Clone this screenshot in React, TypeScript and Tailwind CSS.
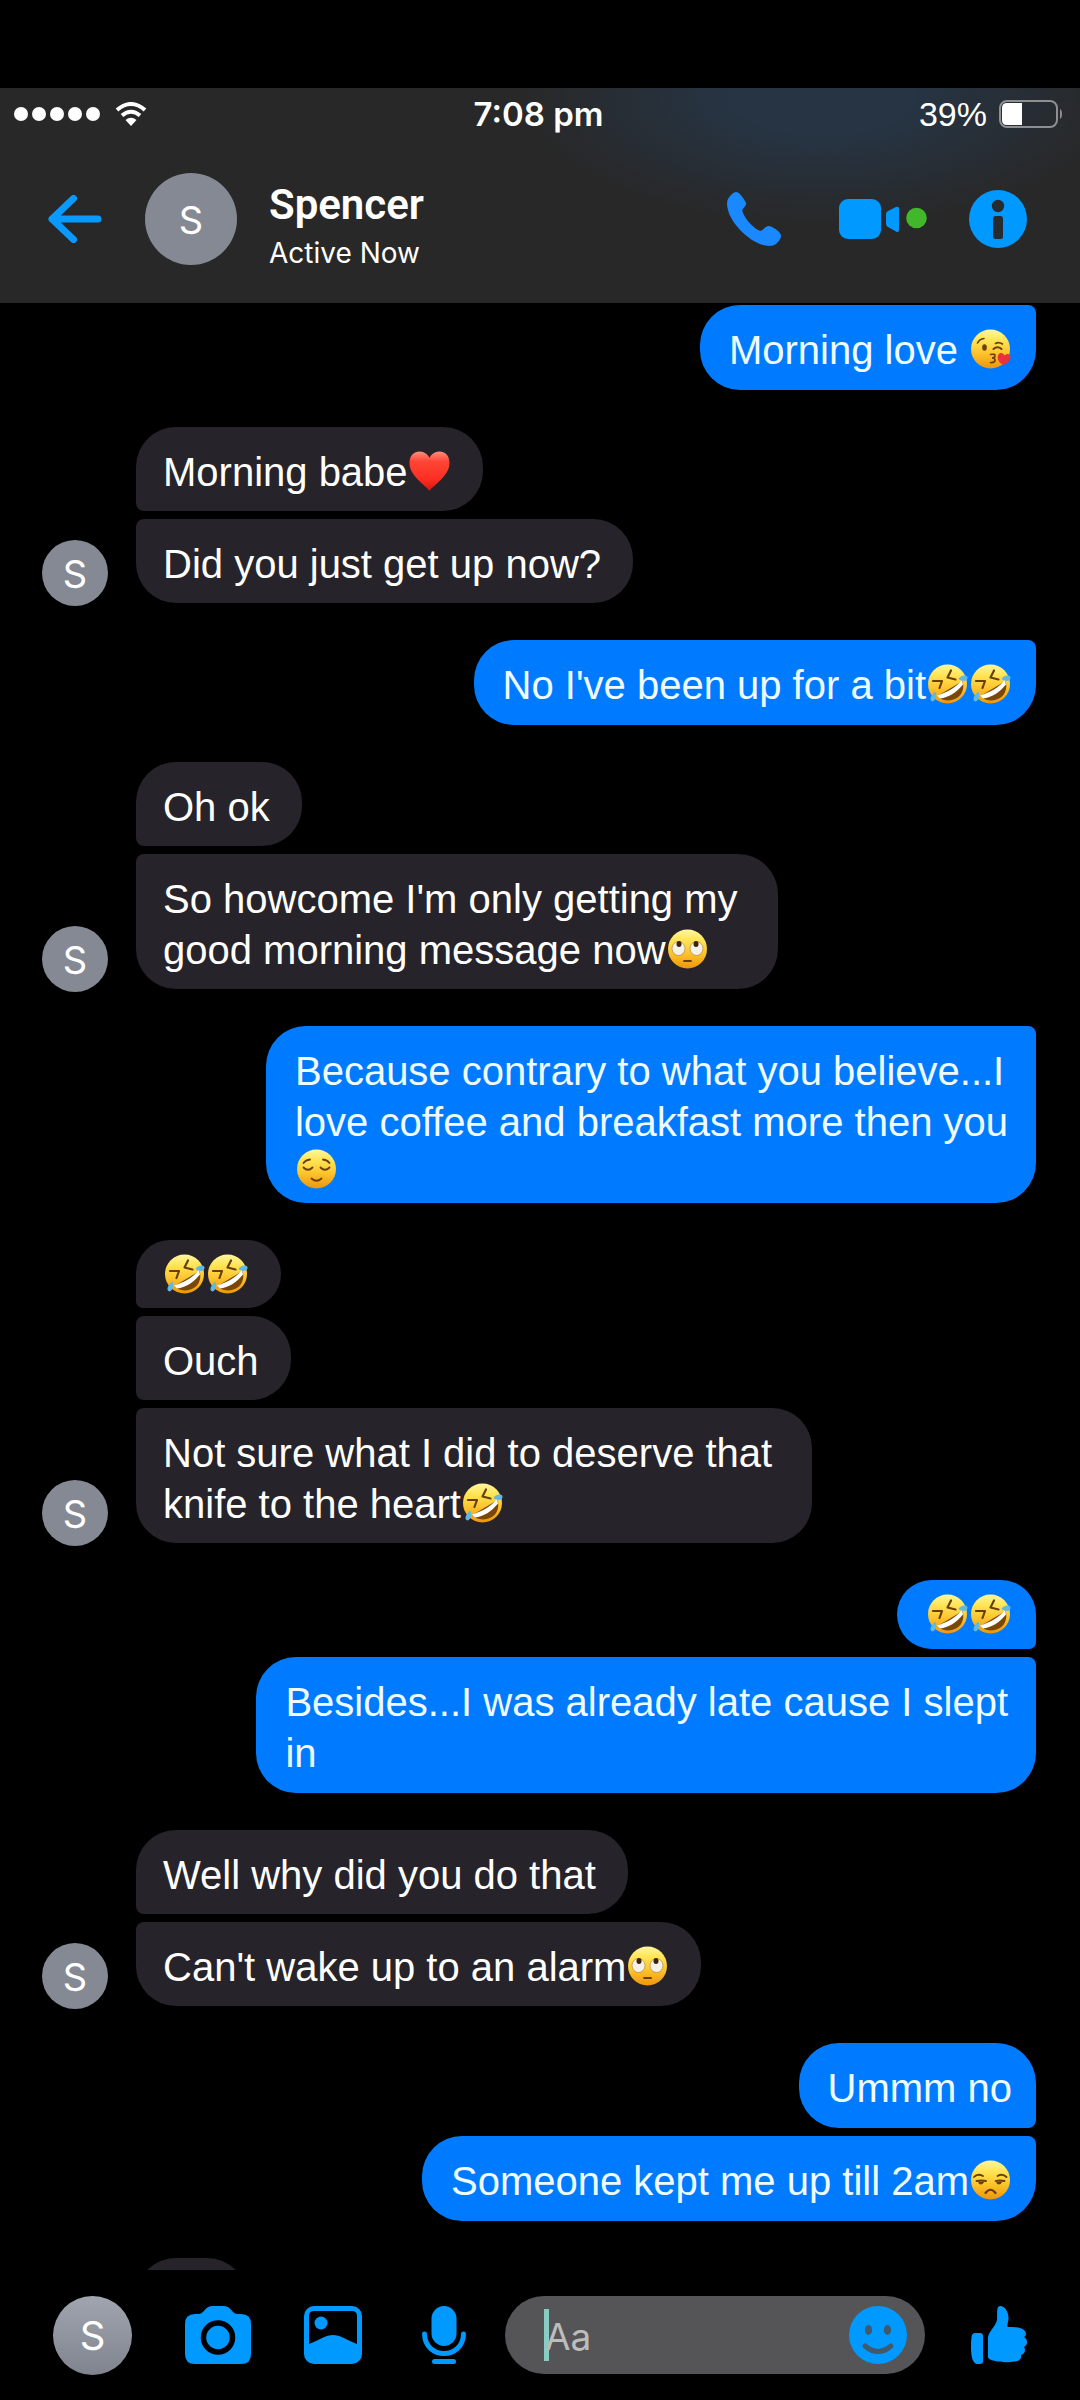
import type { ReactNode } from 'react'
import clsx from 'clsx'

type Message = {
  text: string
}

type Group = {
  from: 'me' | 'spencer'
  messages: Message[]
}

const groups: Group[] = [
  { from: 'me', messages: [{ text: 'Morning love 😘' }] },
  {
    from: 'spencer',
    messages: [{ text: 'Morning babe❤' }, { text: 'Did you just get up now?' }],
  },
  { from: 'me', messages: [{ text: "No I've been up for a bit🤣🤣" }] },
  {
    from: 'spencer',
    messages: [
      { text: 'Oh ok' },
      { text: "So howcome I'm only getting my\ngood morning message now🙄" },
    ],
  },
  {
    from: 'me',
    messages: [
      { text: 'Because contrary to what you believe...I\nlove coffee and breakfast more then you\n😌' },
    ],
  },
  {
    from: 'spencer',
    messages: [
      { text: '🤣🤣' },
      { text: 'Ouch' },
      { text: 'Not sure what I did to deserve that\nknife to the heart🤣' },
    ],
  },
  {
    from: 'me',
    messages: [
      { text: '🤣🤣' },
      { text: 'Besides...I was already late cause I slept\nin' },
    ],
  },
  {
    from: 'spencer',
    messages: [{ text: 'Well why did you do that' }, { text: "Can't wake up to an alarm🙄" }],
  },
  {
    from: 'me',
    messages: [{ text: 'Ummm no' }, { text: 'Someone kept me up till 2am😒' }],
  },
]

const brown = '#6b3f0a'

const emojiArt: Record<string, { label: string; art: ReactNode }> = {
  '😘': {
    label: 'face blowing a kiss',
    art: (
      <>
        <circle cx="20" cy="20" r="19.5" fill="url(#face)" />
        <g fill="none" stroke={brown} strokeWidth="1.6" strokeLinecap="round">
          <path d="M7 14 Q9 10 13.500 9.500" />
          <path d="M25 14.500 Q28 12.500 32 15" />
          <path d="M23 20 Q27 16.500 31 20" strokeWidth="2" />
          <path d="M20 25.500 Q25 24.500 24.500 27 Q24 29 21.500 29 Q25 29 24.500 31.500 Q24 34 20 33.500" />
        </g>
        <ellipse cx="14" cy="18.500" rx="2.300" ry="3.300" fill={brown} />
        <path d="M33 36 C28 34 26 29 28 25.500 C30 23 33 24 34 26.500 C36 24 39.500 24.500 40 27.500 C40.500 31 37 34.500 33 36 Z" fill="#e8323c" />
      </>
    ),
  },
  '❤': {
    label: 'red heart',
    art: (
      <path
        d="M20 40 C16 34 0 25 0 12 C0 4 5 0.500 10 0.500 C15 0.500 18.500 3.500 20 7 C21.500 3.500 25 0.500 30 0.500 C35 0.500 40 4 40 12 C40 25 24 34 20 40 Z"
        fill="url(#heart)"
      />
    ),
  },
  '🤣': {
    label: 'rolling on the floor laughing',
    art: (
      <>
        <circle cx="20" cy="20" r="19.5" fill="url(#face)" />
        <g fill="none" stroke={brown} strokeWidth="2.200" strokeLinecap="round" strokeLinejoin="round">
          <path d="M5.500 17 L14.500 17 L12 24" />
          <path d="M23.500 6.500 L20 13.500 L28 15.500" />
        </g>
        <path d="M10 32 L35 17 C37.500 25 34 33 26 35.500 C19 37.500 13 36 10 32 Z" fill="#7a4609" />
        <path d="M9.500 31.500 C20 28 28 24 34.500 16 L35.500 20.500 C29 28.500 21 33.500 12.500 34.500 Z" fill="#fff" />
        <path d="M31 15 C33 11.500 38 10.500 40 13 C40.500 17 36 18.500 31 15 Z" fill="#5fb9e6" />
        <path d="M8 27.500 C9.500 32 8 37 5 37.500 C1.500 37 2.500 31.500 8 27.500 Z" fill="#5fb9e6" />
      </>
    ),
  },
  '🙄': {
    label: 'face with rolling eyes',
    art: (
      <>
        <circle cx="20" cy="20" r="19.5" fill="url(#face)" />
        <g fill="#f4f1ea" stroke="#b9852f" strokeWidth="0.700">
          <ellipse cx="11" cy="19.500" rx="6.500" ry="7" />
          <ellipse cx="29" cy="19.500" rx="6.500" ry="7" />
        </g>
        <ellipse cx="11.500" cy="15" rx="2.500" ry="3" fill="#3f2306" />
        <ellipse cx="28.500" cy="15" rx="2.500" ry="3" fill="#3f2306" />
        <path d="M16.500 32 H23.500" stroke={brown} strokeWidth="1.800" strokeLinecap="round" />
      </>
    ),
  },
  '😌': {
    label: 'relieved face',
    art: (
      <>
        <circle cx="20" cy="20" r="19.5" fill="url(#face)" />
        <g fill="none" stroke={brown} strokeWidth="1.800" strokeLinecap="round">
          <path d="M7 18.500 Q11.500 23 16 18.500" />
          <path d="M24 18.500 Q28.500 23 33 18.500" />
          <path d="M7 14 Q9 11 13.500 10.500" />
          <path d="M26.500 10.500 Q31 11 33 14" />
          <path d="M15 29.500 Q20 34 25 29.500" />
        </g>
      </>
    ),
  },
  '😒': {
    label: 'unamused face',
    art: (
      <>
        <circle cx="20" cy="20" r="19.5" fill="url(#face)" />
        <g fill="none" stroke={brown} strokeWidth="1.800" strokeLinecap="round">
          <path d="M3.500 17 Q7 13 12.500 16" />
          <path d="M27 16 Q32 13 36 17" />
          <path d="M6 21 Q11 20 15.500 21" />
          <path d="M25 21 Q29 20 34 21" />
          <path d="M15 33 Q20 26.500 25 33" strokeWidth="2.200" />
        </g>
        <path d="M7.500 21.500 H14 Q12 25.500 8.500 24 Z M25.500 21.500 H32 Q30 25.500 26.500 24 Z" fill={brown} />
      </>
    ),
  },
}

function EmojiGradients() {
  return (
    <svg className="absolute h-0 w-0" aria-hidden="true">
      <defs>
        <linearGradient id="face" x1="0" y1="0" x2="0" y2="1">
          <stop offset="0" stopColor="#fff6a0" />
          <stop offset="0.25" stopColor="#ffe75a" />
          <stop offset="0.6" stopColor="#fdc52d" />
          <stop offset="1" stopColor="#ee950c" />
        </linearGradient>
        <linearGradient id="heart" x1="0" y1="0" x2="0" y2="1">
          <stop offset="0" stopColor="#ff8d7c" />
          <stop offset="0.25" stopColor="#ff4535" />
          <stop offset="0.7" stopColor="#fb2e22" />
          <stop offset="1" stopColor="#d9160f" />
        </linearGradient>
      </defs>
    </svg>
  )
}

function Emoji({ char, block }: { char: string; block?: boolean }) {
  const { label, art } = emojiArt[char]
  return (
    <svg
      viewBox="0 0 40 40"
      role="img"
      aria-label={label}
      className={clsx('mx-px h-10 w-[41px]', block ? 'block' : 'inline-block align-[-5px]')}
    >
      {art}
    </svg>
  )
}

function Line({ text }: { text: string }) {
  const parts = text.split(/(😘|❤|🤣|🙄|😌|😒)/u).filter(Boolean)
  const emojiOnly = parts.every((part) => part in emojiArt)

  if (emojiOnly) {
    return (
      <span className="flex h-[41px] items-end">
        {parts.map((part, i) => (
          <Emoji key={i} char={part} block />
        ))}
      </span>
    )
  }

  return (
    <span className="block whitespace-nowrap">
      {parts.map((part, i) => (part in emojiArt ? <Emoji key={i} char={part} /> : part))}
    </span>
  )
}

function Bubble({ text, mine, first, last }: { text: string; mine: boolean; first: boolean; last: boolean }) {
  const lines = text.split('\n')
  const emojiOnly = lines[0] === '🤣🤣'
  const multiline = lines.length > 1
  return (
    <p
      className={clsx(
        "w-fit rounded-[40px] font-['Liberation_Sans',Arial,sans-serif] text-[40px] leading-[51px]",
        emojiOnly ? 'pt-[13px]' : 'pt-5',
        emojiOnly ? (mine ? 'pb-[15px]' : 'pb-[14px]') : mine ? 'pb-[14px]' : 'pb-[13px]',
        mine ? 'bg-[#007bff] pl-[29px] text-[#effbff]' : 'bg-[#26242a] pl-[27px] text-white',
        mine && (multiline ? 'pr-7' : 'pr-6'),
        !mine && (multiline ? 'pr-10' : 'pr-8'),
        mine && (!first || last) && 'rounded-tr-lg',
        mine && !last && 'rounded-br-lg',
        !mine && !first && 'rounded-tl-lg',
        !mine && !last && 'rounded-bl-lg',
      )}
    >
      {lines.map((line) => (
        <Line key={line} text={line} />
      ))}
    </p>
  )
}

function MessageGroup({ group }: { group: Group }) {
  const mine = group.from === 'me'
  return (
    <li className={clsx('flex items-end', mine ? 'justify-end' : 'justify-start')}>
      {!mine && (
        <span className="-mb-[3px] mr-7 flex size-[66px] shrink-0 items-center justify-center rounded-full bg-[#858994] pt-0.5 text-[38px]">
          S
        </span>
      )}
      <div className={clsx('flex flex-col gap-2', mine ? 'items-end' : 'items-start')}>
        {group.messages.map((message, i) => (
          <Bubble
            key={i}
            text={message.text}
            mine={mine}
            first={i === 0}
            last={i === group.messages.length - 1}
          />
        ))}
      </div>
    </li>
  )
}

function StatusBar() {
  return (
    <div className="grid h-[52px] grid-cols-3 items-center pl-[14px] pr-[17px] text-[34px] leading-[40px]">
      <div className="flex items-center gap-1">
        {[0, 1, 2, 3, 4].map((dot) => (
          <span key={dot} className="size-[14px] rounded-full bg-white" />
        ))}
        <svg viewBox="0 0 32 24" className="ml-[11px] h-6 w-8" aria-label="Wi-Fi" role="img">
          <path d="M2 8 Q16 -4 30 8" fill="none" stroke="#fff" strokeWidth="4" />
          <path d="M7 13.500 Q16 6 25 13.500" fill="none" stroke="#fff" strokeWidth="4" />
          <path d="M10.500 18 Q16 13.500 21.500 18 L16 24 Z" fill="#fff" />
        </svg>
      </div>
      <span className="text-center text-[33px] font-semibold">7:08 pm</span>
      <div className="flex items-center justify-end gap-3">
        <span className="font-['Liberation_Sans',Arial,sans-serif] text-[34px]">39%</span>
        <svg viewBox="0 0 64 28" className="h-7 w-16" aria-hidden="true">
          <rect x="1" y="1" width="57" height="26" rx="7" fill="none" stroke="#8d8f92" strokeWidth="2" />
          <path d="M8 3 H23 V25 H8 Q3 25 3 20 V8 Q3 3 8 3 Z" fill="#fff" />
          <path d="M61 9 Q63 10 63 14 Q63 18 61 19 Z" fill="#8d8f92" />
        </svg>
      </div>
    </div>
  )
}

function Header() {
  return (
    <header className="shrink-0 bg-[#282828] bg-[radial-gradient(ellipse_28%_60%_at_76%_4%,#263443_0%,#263443_30%,transparent_100%)]">
      <StatusBar />
      <div className="flex h-[163px] items-center pb-[5px] pl-12 pr-[53px]">
        <button type="button" aria-label="Back">
          <svg viewBox="0 0 54 48" className="h-12 w-[54px]">
            <path
              d="M50 24 H5 M25.500 3.500 L4 24 L25.500 44.500"
              fill="none"
              stroke="#0a99ff"
              strokeWidth="7"
              strokeLinecap="round"
              strokeLinejoin="round"
            />
          </svg>
        </button>
        <span className="ml-[43px] flex size-[92px] items-center justify-center rounded-full bg-[#858994] pt-0.5 text-[38px]">
          S
        </span>
        <div className="ml-8 flex-1 pt-4">
          <h1 className="font-['Roboto','Liberation_Sans',sans-serif] text-[42px] leading-[52px] font-semibold">Spencer</h1>
          <p className="text-[28px] leading-[44px]">Active Now</p>
        </div>
        <button type="button" aria-label="Voice call">
          <svg viewBox="0 0 54 54" className="size-[54px]">
            <path
              d="M9 0 C12 0 15 4 18 9 C20 12 19 13 17 15.500 C15 18 15 19 16 21 C19 28 26 35 31 38 C33 39 34 39 36 37.500 C39 34.500 41 33 45 35 C50 37.500 54 41 54 44 C54 47 51 50 49 52 C46 54.500 39 54.500 33 52 C18 46 4 30 1 18 C-1 11 0 7 4 3 C6 1 7.500 0 9 0 Z"
              fill="#1a88ff"
            />
          </svg>
        </button>
        <button type="button" aria-label="Video call" className="ml-[58px]">
          <svg viewBox="0 0 88 40" className="h-10 w-[88px]">
            <rect width="42" height="40" rx="9" fill="#0099ff" />
            <path d="M47 15 Q47 13 49 12 L57 8 Q60 7 60 10 V31 Q60 34 57 32.500 L49 28 Q47 27 47 25 Z" fill="#0099ff" />
            <circle cx="77.500" cy="19" r="10.300" fill="#42b72a" />
          </svg>
        </button>
        <button type="button" aria-label="Conversation details" className="ml-[42px]">
          <svg viewBox="0 0 58 58" className="size-[58px]">
            <circle cx="29" cy="29" r="29" fill="#0099ff" />
            <circle cx="29" cy="16" r="6.200" fill="#262b30" />
            <rect x="24" y="26" width="10" height="23" rx="2.500" fill="#262b30" />
          </svg>
        </button>
      </div>
    </header>
  )
}

function Composer() {
  return (
    <form className="flex h-[130px] shrink-0 items-center bg-black px-[53px]" onSubmit={(e) => e.preventDefault()}>
      <button
        type="button"
        aria-label="Profile"
        className="flex size-[79px] shrink-0 items-center justify-center rounded-full bg-linear-to-b from-[#a0a5b0] to-[#80848e] pt-0.5 text-[40px]"
      >
        S
      </button>
      <button type="button" aria-label="Camera" className="ml-[53px] shrink-0">
        <svg viewBox="0 0 66 58" className="h-[58px] w-[66px]">
          <path
            d="M10 8 H13 C20 8 19 0 28 0 H38 C47 0 46 8 53 8 H56 Q66 8 66 18 V48 Q66 58 56 58 H10 Q0 58 0 48 V18 Q0 8 10 8 Z"
            fill="#0099ff"
          />
          <circle cx="33" cy="31.500" r="14.500" fill="none" stroke="#000" strokeWidth="5.500" />
        </svg>
      </button>
      <button type="button" aria-label="Gallery" className="ml-[53px] shrink-0">
        <svg viewBox="0 0 58 58" className="size-[58px]">
          <rect width="58" height="58" rx="10" fill="#0099ff" />
          <path d="M5 10 Q5 5 10 5 H48 Q53 5 53 10 V38 C43 34 36 29 29 29 C22 29 15 34 5 38 Z" fill="#000" />
          <circle cx="17" cy="17" r="6.500" fill="#0099ff" />
        </svg>
      </button>
      <button type="button" aria-label="Voice message" className="ml-[60px] shrink-0">
        <svg viewBox="0 0 44 58" className="h-[58px] w-[44px]">
          <rect x="9.500" width="25" height="40" rx="12.500" fill="#0099ff" />
          <path d="M2.500 28 C3 54 41 54 41.500 28" fill="none" stroke="#0099ff" strokeWidth="5" strokeLinecap="round" />
          <rect x="10" y="53" width="24" height="5" rx="2.500" fill="#0099ff" />
        </svg>
      </button>
      <div className="relative ml-[39px] flex h-[78px] min-w-0 flex-1 items-center rounded-full bg-[#555557] pl-10 pr-[18px]">
        <span className="absolute top-[13px] left-[39px] h-[52px] w-[5px] bg-[#88ccc4]" />
        <input
          type="text"
          aria-label="Message"
          placeholder="Aa"
          className="relative min-w-0 flex-1 bg-transparent pt-1 text-[37px] leading-[48px] text-white outline-none placeholder:text-[#bdbdbd]"
        />
        <button type="button" aria-label="Choose an emoji" className="shrink-0">
          <svg viewBox="0 0 58 58" className="size-[58px]">
            <circle cx="29" cy="29" r="29" fill="#0099ff" />
            <ellipse cx="19.500" cy="24" rx="3.600" ry="5" fill="#40596b" />
            <ellipse cx="38.500" cy="24" rx="3.600" ry="5" fill="#40596b" />
            <path d="M16 40 Q29 51 42 40" fill="none" stroke="#40596b" strokeWidth="5" strokeLinecap="round" />
          </svg>
        </button>
      </div>
      <button type="button" aria-label="Send a like" className="ml-[46px] shrink-0">
        <svg viewBox="0 0 56 58" className="h-[58px] w-[56px]">
          <path d="M4 27 H9 Q12 27 12 30 V55 Q12 58 9 58 H5 Q0 55 0 43 Q0 31 1 29 Q2 27 4 27 Z" fill="#0099ff" />
          <path
            d="M17 51 V32 C17 26 25 20 26 14 C26.500 9 25 0 29 0 C34 0 37.500 6 37.500 12 C37.500 16 36 18 36.500 21 C42 21 50 21 53 24 C56 27 55 30 53 31 C57 33 57 39 53 41 C55 44 54 48 50 49 C51 53 48 55 44 55.500 C38 56.500 30 56.500 24 55 C20 54 17 53 17 51 Z"
            fill="#0099ff"
          />
        </svg>
      </button>
    </form>
  )
}

export default function App() {
  return (
    <div className="flex h-screen flex-col bg-black font-['Inter','Liberation_Sans',sans-serif] text-white">
      <EmojiGradients />
      <div className="h-[88px] shrink-0" />
      <Header />
      <main className="min-h-0 flex-1 overflow-hidden">
        <ul className="flex flex-col gap-[37px] pt-[2px] pl-[42px] pr-[44px]">
          {groups.map((group, i) => (
            <MessageGroup key={i} group={group} />
          ))}
          <li className="ml-[94px] h-[84px] w-[111px] rounded-[40px] rounded-bl-lg bg-[#26242a]" />
        </ul>
      </main>
      <Composer />
    </div>
  )
}
